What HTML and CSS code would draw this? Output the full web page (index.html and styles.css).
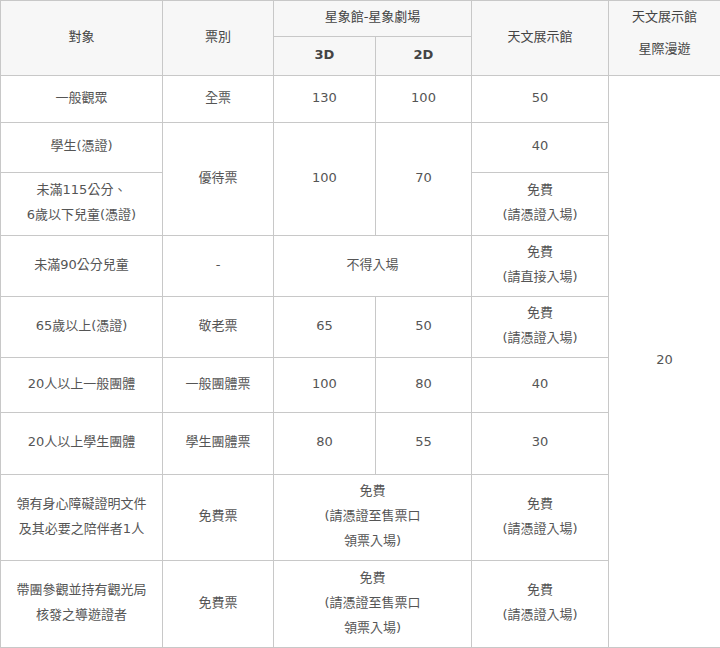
FILE: index.html
```html
<!DOCTYPE html>
<html lang="zh-Hant">
<head>
<meta charset="utf-8">
<title>票價</title>
<link rel="stylesheet" href="styles.css">
</head>
<body>
<table class="fares">
  <colgroup>
    <col class="c1"><col class="c2"><col class="c3"><col class="c4"><col class="c5"><col class="c6">
  </colgroup>
  <thead>
    <tr class="h1">
      <th rowspan="2">對象</th>
      <th rowspan="2">票別</th>
      <th colspan="2">星象館-星象劇場</th>
      <th rowspan="2">天文展示館</th>
      <th rowspan="2" class="tall">天文展示館<br>星際漫遊</th>
    </tr>
    <tr class="h2">
      <th class="num">3D</th>
      <th class="num">2D</th>
    </tr>
  </thead>
  <tbody>
    <tr class="r1">
      <td>一般觀眾</td><td>全票</td><td>130</td><td>100</td><td>50</td>
      <td rowspan="9">20</td>
    </tr>
    <tr class="r2">
      <td>學生(憑證)</td>
      <td rowspan="2">優待票</td><td rowspan="2">100</td><td rowspan="2">70</td>
      <td>40</td>
    </tr>
    <tr class="r3">
      <td>未滿115公分、<br>6歲以下兒童(憑證)</td>
      <td>免費<br>(請憑證入場)</td>
    </tr>
    <tr class="r4">
      <td>未滿90公分兒童</td><td>-</td><td colspan="2">不得入場</td>
      <td>免費<br>(請直接入場)</td>
    </tr>
    <tr class="r5">
      <td>65歲以上(憑證)</td><td>敬老票</td><td>65</td><td>50</td>
      <td>免費<br>(請憑證入場)</td>
    </tr>
    <tr class="r6">
      <td>20人以上一般團體</td><td>一般團體票</td><td>100</td><td>80</td><td>40</td>
    </tr>
    <tr class="r7">
      <td>20人以上學生團體</td><td>學生團體票</td><td>80</td><td>55</td><td>30</td>
    </tr>
    <tr class="r8">
      <td>領有身心障礙證明文件<br>及其必要之陪伴者1人</td><td>免費票</td>
      <td colspan="2">免費<br>(請憑證至售票口<br>領票入場)</td>
      <td>免費<br>(請憑證入場)</td>
    </tr>
    <tr class="r9">
      <td>帶團參觀並持有觀光局<br>核發之導遊證者</td><td>免費票</td>
      <td colspan="2">免費<br>(請憑證至售票口<br>領票入場)</td>
      <td>免費<br>(請憑證入場)</td>
    </tr>
  </tbody>
</table>
</body>
</html>
```
FILE: styles.css
```css
html, body {
  margin: 0;
  padding: 0;
  background: #ffffff;
}

.fares {
  width: 720px;
  border-collapse: collapse;
  table-layout: fixed;
  font-family: "DejaVu Sans", "Noto Sans CJK TC", sans-serif;
  font-size: 13px;
  color: #555555;
}

.c1 { width: 162px; }
.c2 { width: 111px; }
.c3 { width: 102px; }
.c4 { width: 96px; }
.c5 { width: 137px; }
.c6 { width: 112px; }

.fares th,
.fares td {
  border: 1px solid #c8c8c8;
  padding: 0 4px 4px;
  text-align: center;
  vertical-align: middle;
  line-height: 25px;
}

.fares th {
  background: #f7f7f7;
  font-weight: normal;
  color: #444444;
}

.fares th.num {
  font-weight: bold;
}

.fares th.tall {
  line-height: 32px;
  vertical-align: top;
  padding-top: 0;
}

.h1 { height: 36px; }
.h2 { height: 39px; }
.r1 { height: 47px; }
.r2 { height: 50px; }
.r3 { height: 63px; }
.r4 { height: 61px; }
.r5 { height: 61px; }
.r6 { height: 55px; }
.r7 { height: 62px; }
.r8 { height: 86px; }
.r9 { height: 87px; }
```
